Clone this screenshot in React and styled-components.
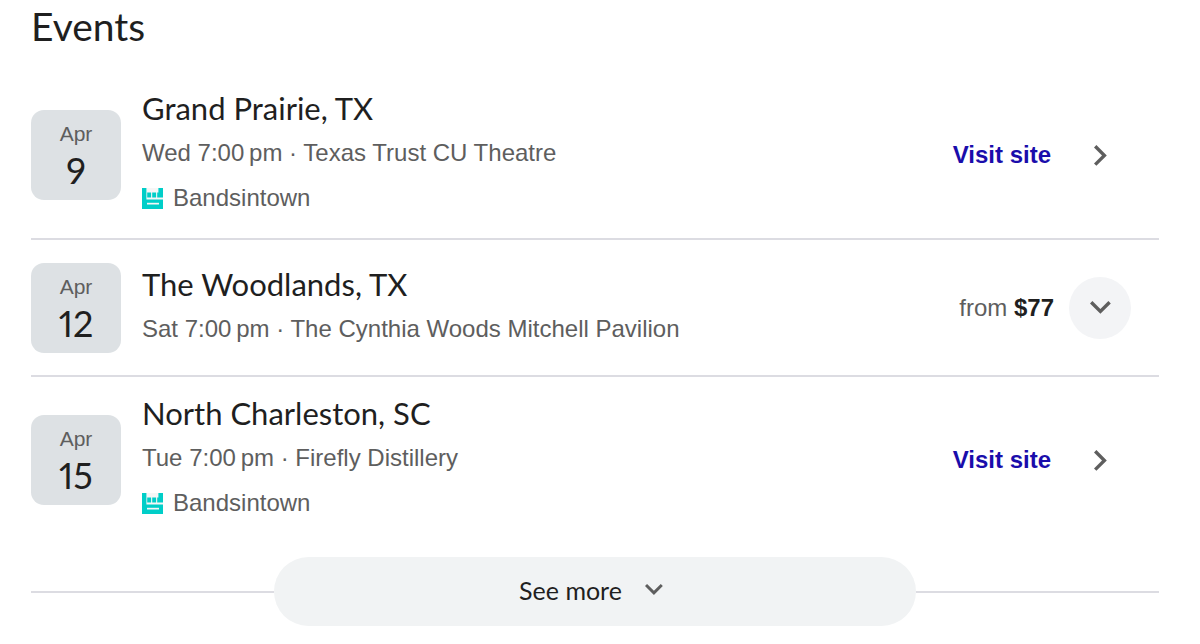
import React from 'react'
import styled, { createGlobalStyle } from 'styled-components'

const events = [
  {
    month: 'Apr',
    day: '9',
    city: 'Grand Prairie, TX',
    time: 'Wed 7:00\u202fpm',
    venue: 'Texas Trust CU Theatre',
    source: 'Bandsintown',
  },
  {
    month: 'Apr',
    day: '12',
    city: 'The Woodlands, TX',
    time: 'Sat 7:00\u202fpm',
    venue: 'The Cynthia Woods Mitchell Pavilion',
    price: '$77',
  },
  {
    month: 'Apr',
    day: '15',
    city: 'North Charleston, SC',
    time: 'Tue 7:00\u202fpm',
    venue: 'Firefly Distillery',
    source: 'Bandsintown',
  },
]

const BandsintownLogo = () => (
  <svg width="21" height="21" viewBox="0 0 21 21" aria-hidden="true">
    <path fill="#f6f6f6" d="M0 0h21v21H0z" />
    <path fill="#00cec8" d="M0 0h4.4v11.4H21V21H0z" />
    <path fill="#00cec8" d="M5.2 4.4h3.9v5.2H5.2zM10.2 4.4h3.9v5.2h-3.9zM15.2 4.4h1.2V0H21v9.6h-5.8z" />
    <path fill="#f6f6f6" d="M5 14.8h12v1.7H5z" />
  </svg>
)

const ChevronRight = () => (
  <svg width="13" height="21" viewBox="0 0 13 21" aria-hidden="true">
    <path d="M2.4 0L12.8 10.4 2.4 20.8 0 18.4l8-8-8-8z" fill="#5e5e5e" />
  </svg>
)

const ChevronDown = ({ width }) => (
  <svg width={width} viewBox="0 0 21 13" aria-hidden="true">
    <path d="M0 2.4L10.4 12.8 20.8 2.4 18.4 0l-8 8-8-8z" fill="#5e5e5e" />
  </svg>
)

const EventRow = ({ event }) => (
  <Row>
    <DateBadge>
      <Month>{event.month}</Month>
      <Day>{event.day}</Day>
    </DateBadge>
    <Details>
      <City>{event.city}</City>
      <Info>{event.time} · {event.venue}</Info>
      {event.source && (
        <Source>
          <BandsintownLogo />
          {event.source}
        </Source>
      )}
    </Details>
    {event.price ? (
      <Action>
        <Price>from <strong>{event.price}</strong></Price>
        <ExpandButton type="button" aria-label="Show ticket prices">
          <ChevronDown width={21} />
        </ExpandButton>
      </Action>
    ) : (
      <VisitLink href="#">
        Visit site
        <LinkIcon><ChevronRight /></LinkIcon>
      </VisitLink>
    )}
  </Row>
)

const App = () => {
  return (
    <>
      <GlobalStyle />
      <Container>
        <Title>Events</Title>
        <EventList>
          {events.map((event) => (
            <EventRow key={event.day} event={event} />
          ))}
        </EventList>
        <More>
          <MoreButton type="button">
            See more
            <ChevronDown width={18} />
          </MoreButton>
        </More>
      </Container>
    </>
  )
}

const GlobalStyle = createGlobalStyle`
  * {
    box-sizing: border-box;
  }
  body {
    margin: 0;
    background-color: #fff;
    color: #1f1f1f;
    font-family: "Liberation Sans", Arial, sans-serif;
    font-size: 24px;
  }
`

const displayFont = '"Google Sans", Lato, sans-serif'

const Container = styled.main`
  padding: 2px 41px 18px 31px;
`

const Title = styled.h2`
  margin: 0 0 22px;
  font-family: ${displayFont};
  font-size: 39px;
  font-weight: 400;
  line-height: 48px;
`

const EventList = styled.ul`
  margin: 0;
  padding: 0;
  list-style: none;
`

const Row = styled.li`
  display: flex;
  align-items: center;
  min-height: 137px;
  padding: 15px 0;
  border-bottom: 2px solid #dcdce2;
  &:last-child {
    border-bottom: none;
  }
`

const DateBadge = styled.div`
  display: flex;
  flex-direction: column;
  align-items: center;
  flex-shrink: 0;
  width: 90px;
  height: 90px;
  padding-top: 8px;
  border-radius: 13px;
  background-color: #dde1e4;
`

const Month = styled.span`
  color: #5e5e5e;
  font-size: 21px;
  line-height: 32px;
`

const Day = styled.span`
  font-family: ${displayFont};
  font-size: 36px;
  font-variant-numeric: proportional-nums;
  line-height: 40px;
`

const Details = styled.div`
  flex: 1;
  padding: 0 20px 2px 21px;
`

const City = styled.h3`
  margin: 0;
  font-family: ${displayFont};
  font-size: 31px;
  font-weight: 400;
  line-height: 43px;
`

const Info = styled.p`
  margin: 0;
  color: #5e5e5e;
  line-height: 45px;
`

const Source = styled.div`
  display: flex;
  align-items: center;
  gap: 10px;
  color: #5e5e5e;
  line-height: 46px;
`

const Action = styled.div`
  display: flex;
  align-items: center;
  gap: 15px;
  padding-right: 28px;
`

const Price = styled.span`
  color: #5e5e5e;
  strong {
    color: #1f1f1f;
  }
`

const ExpandButton = styled.button`
  display: flex;
  align-items: center;
  justify-content: center;
  width: 62px;
  height: 62px;
  padding: 0;
  border: none;
  border-radius: 50%;
  background-color: #f3f4f6;
  cursor: pointer;
`

const VisitLink = styled.a`
  display: flex;
  align-items: center;
  gap: 18px;
  padding-right: 28px;
  color: #1a0dab;
  font-weight: 700;
  text-decoration: none;
`

const LinkIcon = styled.span`
  display: flex;
  align-items: center;
  justify-content: center;
  width: 62px;
`

const More = styled.div`
  display: flex;
  align-items: center;
  margin-top: 14px;
  &::before,
  &::after {
    content: "";
    flex: 1;
    height: 2px;
    background-color: #dcdce2;
  }
`

const MoreButton = styled.button`
  display: flex;
  align-items: center;
  justify-content: center;
  gap: 23px;
  width: 57%;
  height: 69px;
  padding: 0 8px 3px 0;
  border: none;
  border-radius: 35px;
  background-color: #f1f3f4;
  color: #1f1f1f;
  font-family: ${displayFont};
  font-size: 25px;
  cursor: pointer;
`

export default App
